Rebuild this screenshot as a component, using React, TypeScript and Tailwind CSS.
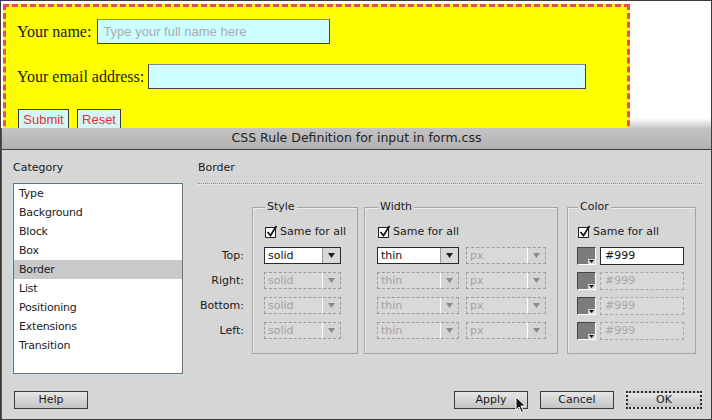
import React from 'react';

const categories = ['Type', 'Background', 'Block', 'Box', 'Border', 'List', 'Positioning', 'Extensions', 'Transition'];
const sides = ['Top:', 'Right:', 'Bottom:', 'Left:'];

function Check() {
  return (
    <span className="relative w-[11px] h-[11px] border border-[#222] bg-white shrink-0">
      <svg className="absolute -top-[3px] left-[0px]" width="12" height="13" viewBox="0 0 12 13">
        <path d="M1.5 7 L4.5 10.5 L10.5 1" fill="none" stroke="#111" strokeWidth="1.7" />
      </svg>
    </span>
  );
}

function SameForAll() {
  return (
    <div className="flex items-center gap-[4px] h-[14px] leading-[14px] text-[#1a1a1a]">
      <Check />
      <span>Same for all</span>
    </div>
  );
}

function Arrow({ disabled }: { disabled?: boolean }) {
  return (
    <svg width="7" height="5" viewBox="0 0 7 5">
      <path d="M0 0 H7 L3.5 5 Z" fill={disabled ? '#8a8a8a' : '#222'} />
    </svg>
  );
}

function Select({ value, width, disabled }: { value: string; width: string; disabled?: boolean }) {
  return (
    <div
      className={`${width} h-[17px] flex border ${
        disabled ? 'border-dashed border-[#9c9c9c] bg-[#d9d9d9] text-[#a2a2a2]' : 'border-[#2a2a2a] bg-white text-[#111]'
      }`}
    >
      <span className="flex-1 pl-[3px] leading-[15px]">{value}</span>
      <span
        className={`w-[18px] flex items-center justify-center border-l ${
          disabled ? 'border-white bg-[#d4d4d4]' : 'border-[#9a9a9a] bg-[#d8d8d8]'
        }`}
      >
        <Arrow disabled={disabled} />
      </span>
    </div>
  );
}

function Swatch() {
  return (
    <span className="relative w-[19px] h-[18px] border border-[#444] border-r-white border-b-white bg-[#7c7c7c] shrink-0">
      <span className="absolute right-0 bottom-0 w-[7px] h-[5px] bg-[#d6d6d6] flex items-center justify-center">
        <svg width="5" height="3" viewBox="0 0 5 3">
          <path d="M0 0 H5 L2.5 3 Z" fill="#111" />
        </svg>
      </span>
    </span>
  );
}

function ColorField({ disabled }: { disabled?: boolean }) {
  return (
    <div className="flex items-center gap-[4px] h-[17px]">
      <Swatch />
      <span
        className={`w-[84px] h-[18px] border leading-[16px] pl-[4px] ${
          disabled ? 'border-dashed border-[#a8a8a8] bg-[#d9d9d9] text-[#a8a8a8]' : 'border-[#2a2a2a] bg-white text-[#111]'
        }`}
      >
        #999
      </span>
    </div>
  );
}

function Group({ title, className, children }: { title: string; className: string; children: React.ReactNode }) {
  return (
    <div className={`${className} h-[147px] flex flex-col border border-[#a4a4a4] shadow-[inset_1px_1px_0_#ececec]`}>
      <span className="-mt-[8px] ml-[1px] self-start px-[2px] bg-[#d6d6d6] leading-[14px] text-[#1a1a1a]">{title}</span>
      {children}
    </div>
  );
}

function DlgButton({ label, primary, width }: { label: string; primary?: boolean; width: string }) {
  return (
    <button
      className={`${width} h-[18px] leading-[14px] text-[#1a1a1a] bg-gradient-to-b from-[#e6e6e6] to-[#c4c4c4] ${
        primary ? 'border-2 border-dotted border-[#2a2a2a]' : 'border border-[#3a3a3a]'
      }`}
    >
      {label}
    </button>
  );
}

export default function App() {
  return (
    <div className="relative w-[712px] h-[420px] overflow-hidden border border-[#3c3c3c] bg-white flex flex-col">
      {/* page behind the dialog */}
      <div className="h-[127px] overflow-hidden shrink-0 flex">
        <div className="mt-[3px] ml-[2px] w-[627px] h-[140px] bg-[#ffff00] border-[3px] border-dashed border-[#ea4a5a] font-['Liberation_Serif',serif] text-[16px] text-[#1a1a1a]">
          <div className="flex items-center gap-[6px] mt-[12px] ml-[11px]">
            <span>Your name:</span>
            <span className="w-[233px] h-[25px] border border-[#444] border-t-[#888] bg-[#ccffff] pl-[5px] leading-[23px] text-[13px] text-[#aaaaaa] font-['Liberation_Sans',sans-serif]">
              Type your full name here
            </span>
          </div>
          <div className="flex items-center gap-[4px] mt-[20px] ml-[11px]">
            <span>Your email address:</span>
            <span className="w-[438px] h-[25px] border border-[#444] border-t-[#888] bg-[#ccffff]" />
          </div>
          <div className="flex gap-[8px] mt-[20px] ml-[12px] font-['Liberation_Sans',sans-serif] text-[13px] text-[#e3303c]">
            <span className="w-[51px] h-[22px] border border-[#3a3a3a] bg-[#d4f6f4] text-center leading-[20px]">Submit</span>
            <span className="w-[44px] h-[22px] border border-[#3a3a3a] bg-[#d4f6f4] text-center leading-[20px]">Reset</span>
          </div>
        </div>
        <div className="flex-1 flex flex-col justify-end">
          <div className="h-[10px] bg-gradient-to-b from-white to-[#c8c8c8]" />
        </div>
      </div>

      {/* dialog */}
      <div className="flex-1 flex flex-col border-l border-[#555] font-['DejaVu_Sans',sans-serif] text-[11px] text-[#1a1a1a]">
        <div className="h-[22px] shrink-0 bg-gradient-to-b from-[#c4c4c4] to-[#b2b2b2] border-b border-[#3e3e3e] text-center leading-[20px] text-[12.5px] text-[#222]">
          CSS Rule Definition for input in form.css
        </div>
        <div className="flex-1 flex bg-[#d6d6d6]">
          {/* category column */}
          <div className="w-[170px] ml-[11px] flex flex-col">
            <span className="mt-[11px] leading-[14px]">Category</span>
            <div className="mt-[8px] h-[191px] border border-[#707070] bg-white shadow-[0_0_0_1px_#bde6ec] flex flex-col tracking-[-0.2px]">
              {categories.map((c) => (
                <div key={c} className={`h-[19px] leading-[20px] pl-[5px] ${c === 'Border' ? 'bg-[#c9c9c9]' : ''}`}>
                  {c}
                </div>
              ))}
            </div>
            <div className="mt-[17px] ml-[1px]">
              <DlgButton label="Help" width="w-[74px]" />
            </div>
          </div>

          {/* settings */}
          <div className="flex-1 ml-[15px] pr-[9px] flex flex-col">
            <span className="mt-[11px] leading-[14px]">Border</span>
            <div className="mt-[8px] border-t border-dotted border-[#8e8e8e] border-b border-b-[#efefef]" />
            <div className="mt-[22px] flex">
              <div className="w-[46px] pt-[40px] flex flex-col gap-[8px] text-right">
                {sides.map((s) => (
                  <span key={s} className="h-[17px] leading-[17px]">
                    {s}
                  </span>
                ))}
              </div>
              <div className="ml-[8px]">
                <Group title="Style" className="w-[106px] pl-[11px]">
                  <div className="mt-[11px] ml-[1px]">
                    <SameForAll />
                  </div>
                  <div className="mt-[8px] flex flex-col gap-[8px]">
                    <Select value="solid" width="w-[77px]" />
                    <Select value="solid" width="w-[77px]" disabled />
                    <Select value="solid" width="w-[77px]" disabled />
                    <Select value="solid" width="w-[77px]" disabled />
                  </div>
                </Group>
              </div>
              <div className="ml-[6px]">
                <Group title="Width" className="w-[194px] pl-[12px]">
                  <div className="mt-[11px] ml-[1px]">
                    <SameForAll />
                  </div>
                  <div className="mt-[8px] flex flex-col gap-[8px]">
                    {[false, true, true, true].map((d, i) => (
                      <div key={i} className="flex gap-[7px]">
                        <Select value="thin" width="w-[82px]" disabled={d} />
                        <Select value="px" width="w-[80px]" disabled />
                      </div>
                    ))}
                  </div>
                </Group>
              </div>
              <div className="ml-[9px]">
                <Group title="Color" className="w-[129px] pl-[9px]">
                  <div className="mt-[11px] ml-[1px]">
                    <SameForAll />
                  </div>
                  <div className="mt-[8px] flex flex-col gap-[8px]">
                    <ColorField />
                    <ColorField disabled />
                    <ColorField disabled />
                    <ColorField disabled />
                  </div>
                </Group>
              </div>
            </div>
            <div className="mt-[37px] flex justify-end gap-[12px]">
              <DlgButton label="Apply" width="w-[74px]" />
              <DlgButton label="Cancel" width="w-[74px]" />
              <DlgButton label="OK" width="w-[76px]" primary />
            </div>
          </div>
        </div>
      </div>

      {/* mouse pointer */}
      <svg className="absolute left-[514px] top-[395px]" width="12" height="18" viewBox="0 0 12 18">
        <path d="M1 1 L1 14 L4 11 L6.5 16.5 L8.5 15.5 L6 10 L10.5 10 Z" fill="#111" stroke="#fff" strokeWidth="1" />
      </svg>
    </div>
  );
}
